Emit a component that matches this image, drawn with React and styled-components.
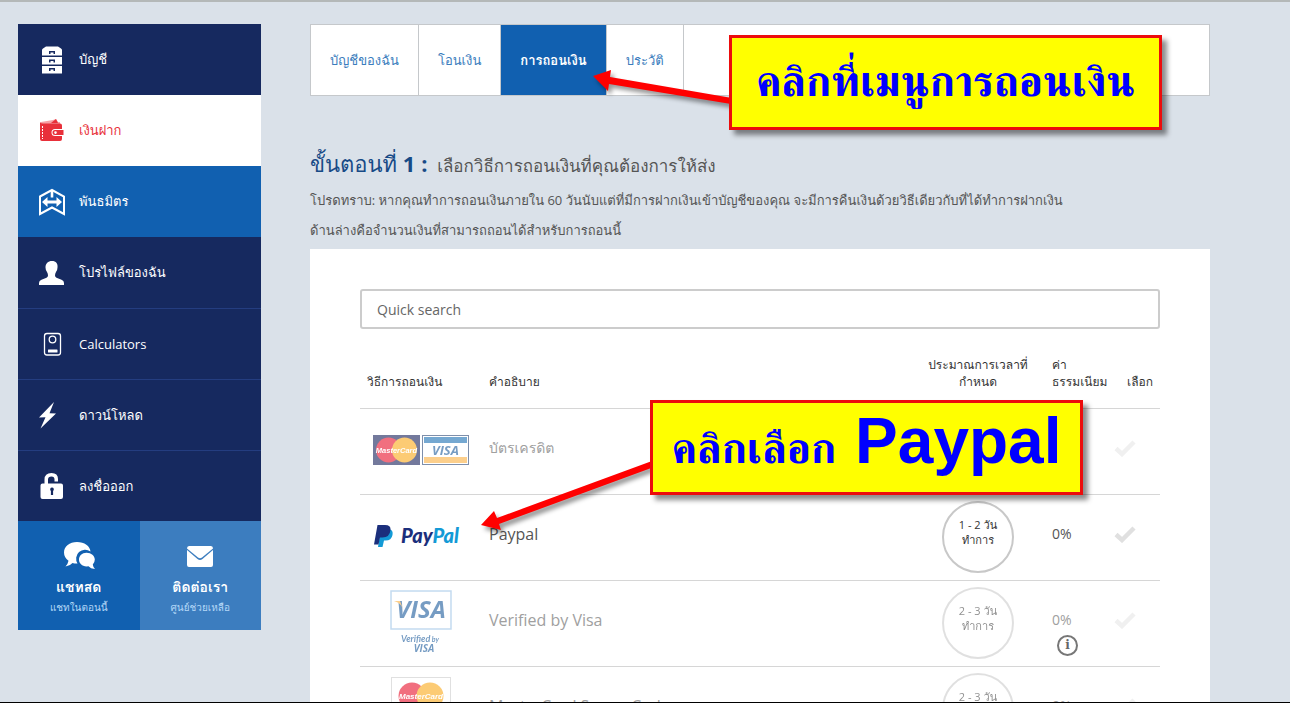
import React, { useState } from 'react';
import styled, { createGlobalStyle } from 'styled-components';

const GlobalStyle = createGlobalStyle`
    * {
        box-sizing: border-box;
    }
    body {
        margin: 0;
        background: #dae1e9;
        font-family: 'Open Sans', 'Loma', 'Noto Sans', sans-serif;
        color: #555;
    }
    a {
        text-decoration: none;
    }
`;

const Page = styled.div`
    position: relative;
    display: flex;
    align-items: flex-start;
    gap: 49px;
    height: 100vh;
    overflow: hidden;
    padding: 22px 80px 0 18px;
    border-top: 2px solid #b4b8b8;
    border-bottom: 1px solid #000;
    background: #dae1e9;
`;

const Sidebar = styled.nav`
    flex: 0 0 243px;
`;

const themes = {
    dark: { bg: '#16295f', fg: '#fff' },
    light: { bg: '#fff', fg: '#e8303a' },
    blue: { bg: '#1160b0', fg: '#fff' },
};

const MenuLink = styled.a`
    display: flex;
    align-items: center;
    gap: 12px;
    height: 71px;
    padding-left: 20px;
    border-top: ${({ $line }) => ($line ? '1px solid #243d80' : 'none')};
    background: ${({ $tone }) => themes[$tone].bg};
    color: ${({ $tone }) => themes[$tone].fg};
    font-size: 13px;

    svg {
        flex: 0 0 29px;
    }
`;

const SupportRow = styled.div`
    display: grid;
    grid-template-columns: 1fr 1fr;
`;

const SupportLink = styled.a`
    display: flex;
    flex-direction: column;
    align-items: center;
    height: 109px;
    padding-top: 19px;
    background: ${({ $pale }) => ($pale ? '#3c7dbf' : '#1160b0')};
    color: #fff;

    strong {
        margin-top: 6px;
        font-size: 14px;
        line-height: 22px;
    }
    small {
        font-size: 10px;
        line-height: 18px;
        color: #b5d8f7;
    }
`;

const Main = styled.main`
    flex: 1;
    min-width: 0;
`;

const Tabs = styled.div`
    display: flex;
    height: 72px;
    border: 1px solid #c5c8cb;
    background: #fff;
`;

const Tab = styled.button`
    padding: 0 19px;
    border: 0;
    border-right: 1px solid #c5c8cb;
    background: ${({ $active }) => ($active ? '#1160b0' : '#fff')};
    color: ${({ $active }) => ($active ? '#fff' : '#3b7dbd')};
    font-family: inherit;
    font-size: 13px;
    font-weight: ${({ $active }) => ($active ? 700 : 400)};
    cursor: pointer;
`;

const StepTitle = styled.h1`
    margin: 48px 0 0;
    font-size: 22px;
    font-weight: 400;
    line-height: 38px;
    color: #174a86;

    span {
        margin-left: 4px;
        font-size: 17px;
        color: #555;
    }
`;

const Note = styled.p`
    margin: 0;
    font-size: 13px;
    line-height: 30px;
    color: #555;
`;

const Card = styled.section`
    margin-top: 4px;
    padding: 40px 50px;
    background: #fff;
`;

const Search = styled.input`
    display: block;
    width: 100%;
    height: 40px;
    padding: 0 15px;
    border: 2px solid #ccc;
    border-radius: 3px;
    font-family: inherit;
    font-size: 14px;
    color: #555;

    &::placeholder {
        color: #666;
        opacity: 1;
    }
`;

const Table = styled.table`
    width: 100%;
    border-collapse: collapse;
    table-layout: fixed;
`;

const HeadCell = styled.th`
    width: ${({ $width }) => ($width ? `${$width}px` : 'auto')};
    height: 79px;
    padding: 0 ${({ $right }) => $right ?? 7}px 18px 7px;
    border-bottom: 1px solid #d6d6d6;
    vertical-align: bottom;
    text-align: ${({ $align }) => $align || 'left'};
    font-size: 12px;
    font-weight: 400;
    line-height: 17px;
    white-space: nowrap;
    color: #333;
`;

const MethodRow = styled.tr`
    height: 86px;
    border-bottom: 1px solid #d6d6d6;
    vertical-align: top;
`;

const Cell = styled.td`
    padding: 26px 0 0 7px;
    font-size: ${({ $large }) => ($large ? 16 : 14)}px;
    line-height: 26px;
    color: ${({ $dim }) => ($dim ? '#a0a0a0' : '#555')};

    &:lang(th) {
        font-size: 14px;
    }
`;

const LogoCell = styled.td`
    padding: 0;
`;

const Logo = styled.div`
    display: flex;
    align-items: center;
    justify-content: center;
    gap: 2px;
    height: 82px;
    opacity: ${({ $dim }) => ($dim ? 0.6 : 1)};
`;

const TimeCell = styled.td`
    padding: 6px 0 0;
`;

const Duration = styled.div`
    width: 72px;
    height: 72px;
    margin: 0 auto;
    padding: 14px 12px 0;
    border: 2px solid #c8c8c8;
    border-radius: 50%;
    text-align: center;
    font-size: 11px;
    line-height: 15px;
    color: #333;
    opacity: ${({ $dim }) => ($dim ? 0.55 : 1)};
`;

const InfoButton = styled.button`
    display: block;
    width: 21px;
    height: 21px;
    margin: 2px 0 0 5px;
    padding: 0;
    border: 2px solid #777;
    border-radius: 50%;
    background: #fff;
    font: bold 12px/17px 'DejaVu Serif', serif;
    color: #666;
`;

const PickCell = styled.td`
    padding: 26px 0 0 8px;
`;

const PickButton = styled.button`
    display: block;
    padding: 4px 0;
    border: 0;
    background: none;
    color: ${({ $dim }) => ($dim ? '#f0f0f0' : '#e0e0e0')};
    cursor: pointer;

    svg {
        display: block;
    }
`;

const Callout = styled.div`
    position: absolute;
    left: ${({ $left }) => $left}px;
    top: ${({ $top }) => $top}px;
    display: flex;
    align-items: baseline;
    justify-content: center;
    gap: 19px;
    width: 433px;
    height: 95px;
    border: 3px solid #ec0c0c;
    background: #ff0;
    box-shadow: 5px 5px 5px rgba(0, 0, 0, 0.45);
    font-family: 'FreeSerif', 'Liberation Serif', serif;
    font-size: 43px;
    font-weight: 700;
    line-height: 92px;
    white-space: nowrap;
    color: #00f;

    b {
        font-family: 'Liberation Sans', sans-serif;
        font-size: 64px;
        line-height: 76px;
    }
`;

const Arrow = styled.svg`
    position: absolute;
    left: ${({ $left }) => $left}px;
    top: ${({ $top }) => $top}px;
    filter: drop-shadow(3px 4px 2px rgba(0, 0, 0, 0.4));
    pointer-events: none;
`;

const Icon = ({ children }) => (
    <svg width="29" height="28" viewBox="0 0 29 28" fill="currentColor" aria-hidden="true">
        {children}
    </svg>
);

const CabinetIcon = () => (
    <Icon>
        <path d="M4 9.5V4Q4 3 5 2.500L8 .5H20L23 2.500Q24 3 24 4V9.500ZM11 8H12.500V6.500H15.500V8H17V5H11Z" fillRule="evenodd" />
        <path d="M4 11H24V18.500H4ZM11 16.500H12.500V15H15.500V16.500H17V13.500H11Z" fillRule="evenodd" />
        <path d="M4 20H24V27.500H4ZM11 25H12.500V23.500H15.500V25H17V22H11Z" fillRule="evenodd" />
    </Icon>
);

const WalletIcon = () => (
    <Icon>
        <path d="M3 5 15 3l3-1 2 3h2v2H3z" opacity=".45" />
        <path d="M13 6 18 2l2 4z" />
        <path d="M2 5q1 1.500 3 1.500H22q2 0 2 2V12H17q-3.500 0-3.500 3.500T17 19h7v3q0 2-2 2H4q-2 0-2-2z" />
        <path d="M17 13h8.500v5H17q-2.500 0-2.500-2.500T17 13zm.5 1.300a1.300 1.300 0 100 2.600 1.300 1.300 0 000-2.600z" fillRule="evenodd" />
        <path d="M4.500 9v13" stroke="#fff" strokeDasharray="2 1" fill="none" />
    </Icon>
);

const PartnerIcon = () => (
    <Icon>
        <path d="M2 8.500 14 2 26 8.500V26L14 19.500 2 26Z" fill="none" stroke="currentColor" strokeWidth="2" />
        <path d="M12.700 3h2.600v6.500h-2.600z" />
        <path d="M4 14 9.500 9V12.500h9V9L24 14 18.500 19V15.500h-9V19z" />
    </Icon>
);

const UserIcon = () => (
    <Icon>
        <path d="M14 2c4 0 6 2.500 5.500 6.500q0 2.500-1.500 4.500-1 1.500-1 3.500 0 1.500 1.500 2.200l5 2q2.500 1 2.500 3.300V26H1v-2q0-2.300 2.500-3.300l5-2Q10 18 10 16.500q0-2-1-3.500-1.500-2-1.500-4.500C7.500 4.500 10 2 14 2z" />
    </Icon>
);

const CalculatorIcon = () => (
    <Icon>
        <rect x="6.5" y="3.5" width="16" height="21.5" rx="2.5" fill="none" stroke="currentColor" strokeWidth="1.300" />
        <circle cx="14.5" cy="9.5" r="3.3" fill="none" stroke="currentColor" strokeWidth="1.300" />
        <rect x="10" y="19.5" width="9.5" height="3" rx=".5" />
    </Icon>
);

const BoltIcon = () => (
    <Icon>
        <path d="M16 1 1 16.500 7.500 16.200 2.500 27.500 18 12.500 11.500 12.300z" />
    </Icon>
);

const UnlockIcon = () => (
    <Icon>
        <path d="M6.500 12V7.500Q6.500 1 13.500 1q6.500 0 6.500 6v2.500h-3.500V7.500q0-3-3-3-3.500 0-3.500 3V12z" />
        <path d="M4.500 11.500H23q2 0 2 2V25q0 2-2 2H4.500q-2 0-2-2V13.500q0-2 2-2zM14 15.500a1.900 1.900 0 00-1.100 3.400V23h2.200v-4.100A1.900 1.900 0 0014 15.500z" fillRule="evenodd" />
    </Icon>
);

const ChatIcon = () => (
    <svg width="32" height="30" viewBox="0 0 32 30" fill="currentColor" aria-hidden="true">
        <path d="M14 2C6.500 2 1 6.500 1 12.500q0 5 4.500 8.300-.5 3-3 5.700 4.500-.5 7-3.500 2.300.6 5 .5A9 9 0 0127.500 11.500C27 6 21.500 2 14 2z" />
        <path d="M23.500 12.800c-4.500 0-7.500 3-7.500 6.800s3 6.800 7.500 6.800l2-.2q2 2.500 6.500 2.800-2-2-2.200-4.500 2-2 2-4.900c0-3.800-3.500-6.800-8.300-6.800z" />
    </svg>
);

const MailIcon = () => (
    <svg width="28" height="30" viewBox="0 0 28 30" fill="currentColor" aria-hidden="true">
        <path d="M3 6h22q2 0 2 2.500L16 17.500q-2 1.500-4 0L1 8.500Q1 6 3 6z" />
        <path d="M1 10 11.500 19q2.500 1.800 5 0L27 10V25q0 2-2 2H3q-2 0-2-2z" />
    </svg>
);

const CheckIcon = () => (
    <svg width="22" height="18" viewBox="0 0 22 18" aria-hidden="true">
        <path d="M2 9.500 8 15 20 3" fill="none" stroke="currentColor" strokeWidth="4.500" />
    </svg>
);

const MasterCardLogo = () => (
    <svg width="47" height="30" viewBox="0 0 47 30" role="img" aria-label="MasterCard">
        <rect width="47" height="30" fill="#17215c" />
        <circle cx="15.5" cy="15" r="12.5" fill="#e8112b" />
        <circle cx="31.5" cy="15" r="12.5" fill="#fba919" />
        <text x="23.5" y="18" textAnchor="middle" fill="#fff" fontFamily="Liberation Sans" fontSize="7.5" fontWeight="700" fontStyle="italic">
            MasterCard
        </text>
    </svg>
);

const VisaLogo = () => (
    <svg width="47" height="30" viewBox="0 0 47 30" role="img" aria-label="Visa">
        <rect x=".5" y=".5" width="46" height="29" fill="#fff" stroke="#2a4674" />
        <rect x="2" y="2" width="43" height="6" fill="#1b6fb3" />
        <rect x="2" y="22" width="43" height="6" fill="#fbb040" />
        <text x="23.5" y="19.5" textAnchor="middle" fill="#1c5b9c" fontFamily="Open Sans" fontSize="13" fontWeight="700" fontStyle="italic">
            VISA
        </text>
    </svg>
);

const PaypalLogo = () => (
    <svg width="96" height="26" viewBox="0 0 96 26" role="img" aria-label="PayPal">
        <path d="M8 6H16q4.500 1 3.500 6-1 5.500-7 5.500H11L9.500 24H5z" fill="#139ad6" />
        <path d="M4.500 2H12q6 0 5.500 5-.8 7.500-8 7.500H7L5.500 21.500H1z" fill="#1b2f7c" />
        <text x="28" y="20" fontFamily="Lato" fontSize="20" fontWeight="900" fontStyle="italic">
            <tspan fill="#1b2f7c">Pay</tspan>
            <tspan fill="#139ad6">Pal</tspan>
        </text>
    </svg>
);

const VerifiedVisaLogo = () => (
    <svg width="62" height="64" viewBox="0 0 62 64" role="img" aria-label="Verified by Visa">
        <rect x="1" y="1" width="60" height="38" fill="#fff" stroke="#9cc3e6" strokeWidth="1.5" />
        <text x="31" y="28" textAnchor="middle" fill="#1c5b9c" fontFamily="Open Sans" fontSize="24" fontWeight="700" fontStyle="italic">
            VISA
        </text>
        <path d="M4 11h6l3 8q-2-6-9-8z" fill="#fbb040" />
        <text x="11" y="52" fill="#1c5b9c" fontFamily="Lato" fontSize="9" fontWeight="700" fontStyle="italic">
            Verified
            <tspan fontSize="7"> by</tspan>
        </text>
        <text x="34" y="62" textAnchor="middle" fill="#1c5b9c" fontFamily="Open Sans" fontSize="10" fontWeight="700" fontStyle="italic">
            VISA
        </text>
    </svg>
);

const SecureCodeLogo = () => (
    <svg width="60" height="62" viewBox="0 0 60 62" role="img" aria-label="MasterCard SecureCode">
        <rect x=".5" y=".5" width="59" height="38" fill="#fff" stroke="#ccc" />
        <circle cx="21" cy="19" r="13.5" fill="#e8112b" />
        <circle cx="39" cy="19" r="13.5" fill="#fba919" />
        <text x="30" y="22" textAnchor="middle" fill="#fff" fontFamily="Liberation Sans" fontSize="8" fontWeight="700" fontStyle="italic">
            MasterCard
        </text>
    </svg>
);

const menu = [
    { label: 'บัญชี', tone: 'dark', icon: <CabinetIcon /> },
    { label: 'เงินฝาก', tone: 'light', icon: <WalletIcon /> },
    { label: 'พันธมิตร', tone: 'blue', icon: <PartnerIcon /> },
    { label: 'โปรไฟล์ของฉัน', tone: 'dark', icon: <UserIcon /> },
    { label: 'Calculators', tone: 'dark', icon: <CalculatorIcon />, line: true },
    { label: 'ดาวน์โหลด', tone: 'dark', icon: <BoltIcon />, line: true },
    { label: 'ลงชื่อออก', tone: 'dark', icon: <UnlockIcon />, line: true },
];

const tabs = ['บัญชีของฉัน', 'โอนเงิน', 'การถอนเงิน', 'ประวัติ'];

const methods = [
    {
        name: 'บัตรเครดิต',
        lang: 'th',
        logo: (
            <>
                <MasterCardLogo />
                <VisaLogo />
            </>
        ),
        dim: true,
    },
    { name: 'Paypal', logo: <PaypalLogo />, time: '1 - 2 วัน ทำการ', fee: '0%' },
    {
        name: 'Verified by Visa',
        logo: <VerifiedVisaLogo />,
        time: '2 - 3 วัน ทำการ',
        fee: '0%',
        dim: true,
        info: true,
    },
    {
        name: 'MasterCard SecureCode',
        logo: <SecureCodeLogo />,
        time: '2 - 3 วัน ทำการ',
        fee: '0%',
        dim: true,
    },
];

function App() {
    const [activeTab, setActiveTab] = useState(2);
    const [query, setQuery] = useState('');

    return (
        <Page>
            <GlobalStyle />
            <Sidebar>
                {menu.map((item) => (
                    <MenuLink
                        href="#"
                        key={item.label}
                        $tone={item.tone}
                        $line={item.line}
                    >
                        {item.icon}
                        {item.label}
                    </MenuLink>
                ))}
                <SupportRow>
                    <SupportLink href="#">
                        <ChatIcon />
                        <strong>แชทสด</strong>
                        <small>แชทในตอนนี้</small>
                    </SupportLink>
                    <SupportLink href="#" $pale>
                        <MailIcon />
                        <strong>ติดต่อเรา</strong>
                        <small>ศูนย์ช่วยเหลือ</small>
                    </SupportLink>
                </SupportRow>
            </Sidebar>
            <Main>
                <Tabs>
                    {tabs.map((label, index) => (
                        <Tab
                            type="button"
                            key={label}
                            $active={index === activeTab}
                            onClick={() => setActiveTab(index)}
                        >
                            {label}
                        </Tab>
                    ))}
                </Tabs>
                <StepTitle>
                    ขั้นตอนที่ <b>1 :</b> <span>เลือกวิธีการถอนเงินที่คุณต้องการให้ส่ง</span>
                </StepTitle>
                <Note>
                    โปรดทราบ: หากคุณทำการถอนเงินภายใน 60 วันนับแต่ที่มีการฝากเงินเข้าบัญชีของคุณ
                    จะมีการคืนเงินด้วยวิธีเดียวกับที่ได้ทำการฝากเงิน
                </Note>
                <Note>ด้านล่างคือจำนวนเงินที่สามารถถอนได้สำหรับการถอนนี้</Note>
                <Card>
                    <Search
                        type="text"
                        aria-label="Quick search"
                        placeholder="Quick search"
                        value={query}
                        onChange={(e) => setQuery(e.target.value)}
                    />
                    <Table>
                        <thead>
                            <tr>
                                <HeadCell $width={122}>วิธีการถอนเงิน</HeadCell>
                                <HeadCell>คำอธิบาย</HeadCell>
                                <HeadCell $width={134} $align="center">
                                    ประมาณการเวลาที่
                                    <br />
                                    กำหนด
                                </HeadCell>
                                <HeadCell $width={61} $right={0}>
                                    ค่า
                                    <br />
                                    ธรรมเนียม
                                </HeadCell>
                                <HeadCell $width={54} $align="right">
                                    เลือก
                                </HeadCell>
                            </tr>
                        </thead>
                        <tbody>
                            {methods.map((item) => (
                                <MethodRow key={item.name}>
                                    <LogoCell>
                                        <Logo $dim={item.dim}>{item.logo}</Logo>
                                    </LogoCell>
                                    <Cell lang={item.lang} $large $dim={item.dim}>
                                        {item.name}
                                    </Cell>
                                    <TimeCell>
                                        {item.time && (
                                            <Duration $dim={item.dim}>{item.time}</Duration>
                                        )}
                                    </TimeCell>
                                    <Cell $dim={item.dim}>
                                        {item.fee}
                                        {item.info && (
                                            <InfoButton type="button" aria-label="Fee details">
                                                i
                                            </InfoButton>
                                        )}
                                    </Cell>
                                    <PickCell>
                                        <PickButton
                                            type="button"
                                            aria-label={`เลือก ${item.name}`}
                                            $dim={item.dim}
                                        >
                                            <CheckIcon />
                                        </PickButton>
                                    </PickCell>
                                </MethodRow>
                            ))}
                        </tbody>
                    </Table>
                </Card>
            </Main>
            <Arrow $left={590} $top={60} width="146" height="46" aria-hidden="true">
                <path d="M3 14 21 8 20 15 142 36 141 42 19 22 18 29z" fill="#f00" />
            </Arrow>
            <Callout $left={729} $top={33}>
                คลิกที่เมนูการถอนเงิน
            </Callout>
            <Arrow $left={478} $top={456} width="176" height="76" aria-hidden="true">
                <path d="M3 67 16 53 19 60 174 3 176 9 21 66 23 72z" fill="#f00" />
            </Arrow>
            <Callout $left={650} $top={398}>
                คลิกเลือก <b>Paypal</b>
            </Callout>
        </Page>
    );
}

export default App;
